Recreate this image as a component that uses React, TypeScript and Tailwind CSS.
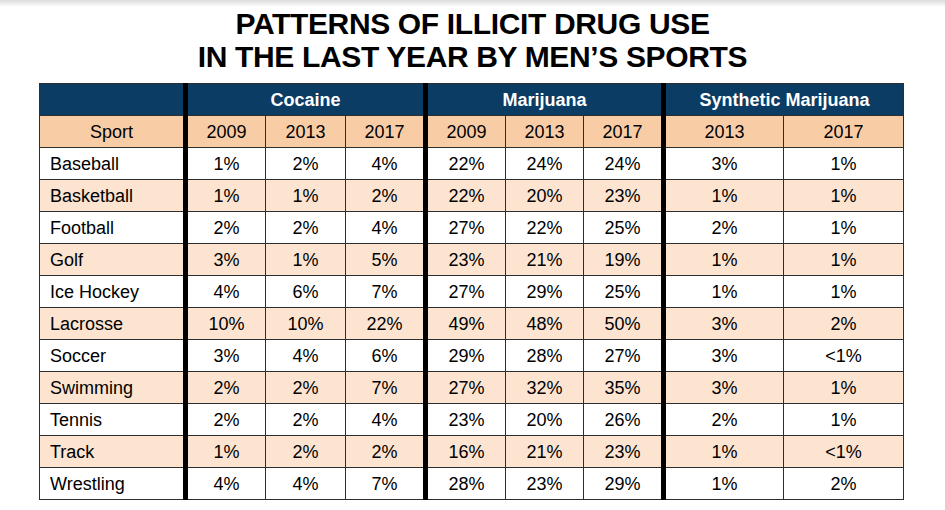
import React from 'react';

type Row = {
  sport: string;
  cocaine: string[];
  marijuana: string[];
  synthetic: string[];
};

const rows: Row[] = [
  { sport: 'Baseball', cocaine: ['1%', '2%', '4%'], marijuana: ['22%', '24%', '24%'], synthetic: ['3%', '1%'] },
  { sport: 'Basketball', cocaine: ['1%', '1%', '2%'], marijuana: ['22%', '20%', '23%'], synthetic: ['1%', '1%'] },
  { sport: 'Football', cocaine: ['2%', '2%', '4%'], marijuana: ['27%', '22%', '25%'], synthetic: ['2%', '1%'] },
  { sport: 'Golf', cocaine: ['3%', '1%', '5%'], marijuana: ['23%', '21%', '19%'], synthetic: ['1%', '1%'] },
  { sport: 'Ice Hockey', cocaine: ['4%', '6%', '7%'], marijuana: ['27%', '29%', '25%'], synthetic: ['1%', '1%'] },
  { sport: 'Lacrosse', cocaine: ['10%', '10%', '22%'], marijuana: ['49%', '48%', '50%'], synthetic: ['3%', '2%'] },
  { sport: 'Soccer', cocaine: ['3%', '4%', '6%'], marijuana: ['29%', '28%', '27%'], synthetic: ['3%', '<1%'] },
  { sport: 'Swimming', cocaine: ['2%', '2%', '7%'], marijuana: ['27%', '32%', '35%'], synthetic: ['3%', '1%'] },
  { sport: 'Tennis', cocaine: ['2%', '2%', '4%'], marijuana: ['23%', '20%', '26%'], synthetic: ['2%', '1%'] },
  { sport: 'Track', cocaine: ['1%', '2%', '2%'], marijuana: ['16%', '21%', '23%'], synthetic: ['1%', '<1%'] },
  { sport: 'Wrestling', cocaine: ['4%', '4%', '7%'], marijuana: ['28%', '23%', '29%'], synthetic: ['1%', '2%'] },
];

const cell = 'h-[32px] p-0 pt-[1px] border border-[#2e2e2e] text-center align-middle';
const thick = 'border-l-[5px] border-l-black';

export default function App() {
  return (
    <div className="w-[945px] h-[510px] bg-[linear-gradient(to_bottom,#dcdcdc,#ffffff_7px)] font-['Liberation_Sans',Arial,sans-serif] text-black">
      <h1 className="pt-[7px] text-center text-[30px] leading-[33px] font-bold tracking-[-0.35px]">
        PATTERNS OF ILLICIT DRUG USE
        <br />
        IN THE LAST YEAR BY MEN’S SPORTS
      </h1>

      <table className="mt-[10px] ml-[39px] w-[865px] table-fixed border-collapse text-[18px] leading-none">
        <colgroup>
          <col className="w-[146px]" />
          <col className="w-[80px]" />
          <col className="w-[80px]" />
          <col className="w-[80px]" />
          <col className="w-[80px]" />
          <col className="w-[78px]" />
          <col className="w-[80px]" />
          <col className="w-[120px]" />
          <col className="w-[120px]" />
        </colgroup>
        <thead>
          <tr className="bg-[#0b3c64] text-white font-bold">
            <th className={`${cell} border-[#1a1a1a]`}></th>
            <th colSpan={3} className={`${cell} ${thick}`}>Cocaine</th>
            <th colSpan={3} className={`${cell} ${thick}`}>Marijuana</th>
            <th colSpan={2} className={`${cell} ${thick}`}>Synthetic Marijuana</th>
          </tr>
          <tr className="bg-[#f8cda6] font-normal">
            <th className={`${cell} font-normal`}>Sport</th>
            <th className={`${cell} ${thick} font-normal`}>2009</th>
            <th className={`${cell} font-normal`}>2013</th>
            <th className={`${cell} font-normal`}>2017</th>
            <th className={`${cell} ${thick} font-normal`}>2009</th>
            <th className={`${cell} font-normal`}>2013</th>
            <th className={`${cell} font-normal`}>2017</th>
            <th className={`${cell} ${thick} font-normal`}>2013</th>
            <th className={`${cell} font-normal`}>2017</th>
          </tr>
        </thead>
        <tbody>
          {rows.map((r, i) => (
            <tr key={r.sport} className={i % 2 === 1 ? 'bg-[#fce4d0]' : 'bg-white'}>
              <td className={`${cell} text-left pl-[10px]`}>{r.sport}</td>
              {r.cocaine.map((v, j) => (
                <td key={'c' + j} className={`${cell} ${j === 0 ? thick : ''}`}>{v}</td>
              ))}
              {r.marijuana.map((v, j) => (
                <td key={'m' + j} className={`${cell} ${j === 0 ? thick : ''}`}>{v}</td>
              ))}
              {r.synthetic.map((v, j) => (
                <td key={'s' + j} className={`${cell} ${j === 0 ? thick : ''}`}>{v}</td>
              ))}
            </tr>
          ))}
        </tbody>
      </table>
    </div>
  );
}
